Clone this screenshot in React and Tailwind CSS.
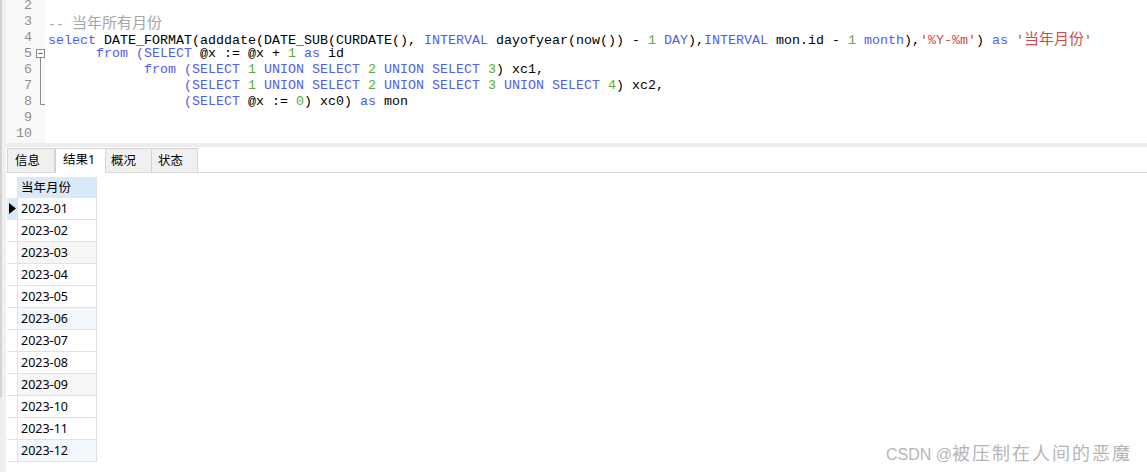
import React from "react";

const K = ({ children }) => <span className="text-[#4f5cf5]">{children}</span>;
const N = ({ children }) => <span className="text-[#5aac3a]">{children}</span>;
const S = ({ children }) => <span className="text-[#d04a4a]">{children}</span>;
const CJK = ({ children }) => (
  <span className="text-[15px] [font-family:'Noto_Sans_CJK_SC',sans-serif]">{children}</span>
);

function Fold({ kind }) {
  if (kind === "start")
    return (
      <svg width="13" height="16" viewBox="0 0 13 16" className="block">
        <rect x="4.5" y="3.5" width="8" height="8" fill="white" stroke="#8c8c8c" />
        <line x1="6.5" y1="7.5" x2="10.5" y2="7.5" stroke="#606060" />
        <line x1="8.5" y1="11.5" x2="8.5" y2="16" stroke="#8c8c8c" />
      </svg>
    );
  if (kind === "mid")
    return (
      <svg width="13" height="16" viewBox="0 0 13 16" className="block">
        <line x1="8.5" y1="0" x2="8.5" y2="16" stroke="#8c8c8c" />
      </svg>
    );
  if (kind === "end")
    return (
      <svg width="13" height="16" viewBox="0 0 13 16" className="block">
        <line x1="8.5" y1="0" x2="8.5" y2="10.5" stroke="#8c8c8c" />
        <line x1="8.5" y1="10.5" x2="13" y2="10.5" stroke="#8c8c8c" />
      </svg>
    );
  return <div className="w-[13px] h-[16px]" />;
}

const lines = [
  { n: 2, fold: null, code: "" },
  {
    n: 3,
    fold: null,
    code: (
      <span className="text-[#a6a6a6]">
        -- <CJK>当年所有月份</CJK>
      </span>
    ),
  },
  {
    n: 4,
    fold: null,
    code: (
      <>
        <K>select</K> DATE_FORMAT(adddate(DATE_SUB(CURDATE(), <K>INTERVAL</K> dayofyear(now()) - <N>1</N>{" "}
        <K>DAY</K>),<K>INTERVAL</K> mon.id - <N>1</N> <K>month</K>),<S>'%Y-%m'</S>) <K>as</K>{" "}
        <S>
          '<CJK>当年月份</CJK>'
        </S>
      </>
    ),
  },
  {
    n: 5,
    fold: "start",
    code: (
      <>
        {"      "}
        <K>from</K> <K>(SELECT</K> @x := @x + <N>1</N> <K>as</K> id
      </>
    ),
  },
  {
    n: 6,
    fold: "mid",
    code: (
      <>
        {"            "}
        <K>from</K> <K>(SELECT</K> <N>1</N> <K>UNION SELECT</K> <N>2</N> <K>UNION SELECT</K> <N>3</N>) xc1,
      </>
    ),
  },
  {
    n: 7,
    fold: "mid",
    code: (
      <>
        {"                 "}
        <K>(SELECT</K> <N>1</N> <K>UNION SELECT</K> <N>2</N> <K>UNION SELECT</K> <N>3</N> <K>UNION SELECT</K>{" "}
        <N>4</N>) xc2,
      </>
    ),
  },
  {
    n: 8,
    fold: "end",
    code: (
      <>
        {"                 "}
        <K>(SELECT</K> @x := <N>0</N>) xc0) <K>as</K> mon
      </>
    ),
  },
  { n: 9, fold: null, code: "" },
  { n: 10, fold: null, code: "" },
];

const months = [
  "2023-01",
  "2023-02",
  "2023-03",
  "2023-04",
  "2023-05",
  "2023-06",
  "2023-07",
  "2023-08",
  "2023-09",
  "2023-10",
  "2023-11",
  "2023-12",
];

const rowBg = (i) => {
  if (i === 2 || i === 8) return "bg-[#f6f6f6]";
  if (i === 5 || i === 11) return "bg-[#f3f8fd]";
  return "bg-white";
};

export default function App() {
  return (
    <div className="relative w-[1147px] h-[472px] bg-white flex overflow-hidden [font-family:'Noto_Sans','Noto_Sans_CJK_SC',sans-serif]">
      {/* left strip */}
      <div className="w-[6px] h-full flex shrink-0">
        <div className="w-[2px] h-full flex flex-col">
          <div className="h-[397px] bg-[#d2d2d2]" />
          <div className="flex-1 bg-[#ececec]" />
        </div>
        <div className="flex-1 bg-[#efefef]" />
      </div>

      <div className="flex-1 flex flex-col min-w-0">
        {/* editor */}
        <div className="h-[143px] flex overflow-hidden bg-white">
          <div className="w-[39px] bg-[#f9f9f9] shrink-0 overflow-hidden">
            <div className="-mt-[2px]">
              {lines.map((l) => (
                <div key={l.n} className="h-[16px] flex">
                  <div className="w-[26px] text-right text-[13.33px] leading-[16px] text-[#8f8f8f] [font-family:'Liberation_Mono',monospace]">
                    {l.n}
                  </div>
                  <Fold kind={l.fold} />
                </div>
              ))}
            </div>
          </div>
          <div className="flex-1 pl-[3px] overflow-hidden">
            <div className="-mt-[2px]">
              {lines.map((l) => (
                <div
                  key={l.n}
                  className="h-[16px] leading-[16px] whitespace-pre text-[13.33px] text-black [font-family:'Liberation_Mono','Noto_Sans_CJK_SC',monospace]"
                >
                  {l.code}
                </div>
              ))}
            </div>
          </div>
        </div>

        {/* separator */}
        <div className="h-[4px] bg-[#ececec]" />

        {/* tabs */}
        <div className="h-[26px] flex items-end border-b border-[#d9d9d9] pl-[1px] bg-white">
          <div className="w-[48px] h-[24px] bg-[#f0f0f0] border border-b-0 border-[#d4d4d4] text-[12.5px] leading-[24px] pl-[7px] text-black">
            信息
          </div>
          <div className="w-[51px] h-[25px] bg-white border-t border-x border-[#d4d4d4] -mb-[1px] text-[12.5px] leading-[22px] pl-[7px] text-black">
            结果1
          </div>
          <div className="w-[46px] h-[24px] bg-[#f0f0f0] border border-b-0 border-l-0 border-[#d4d4d4] text-[12.5px] leading-[24px] pl-[5px] text-black">
            概况
          </div>
          <div className="w-[46px] h-[24px] bg-[#f0f0f0] border border-b-0 border-l-0 border-[#d4d4d4] text-[12.5px] leading-[24px] pl-[6px] text-black">
            状态
          </div>
        </div>

        {/* grid */}
        <div className="pt-[4px] pl-[1px]">
          <div className="flex h-[21px]">
            <div className="w-[11px] bg-white border-r border-[#e2e2e2]" />
            <div className="w-[79px] bg-[#d9e9f7] border-r border-[#e2e2e2] text-[12.5px] leading-[21px] pl-[3px] text-black">
              当年月份
            </div>
          </div>
          {months.map((m, i) => (
            <div key={m} className="flex h-[22px]">
              <div
                className={`w-[11px] border-r border-b border-[#e2e2e2] flex items-center justify-start pl-[2px] ${
                  i === 0 ? "bg-[#d9e9f7]" : "bg-white"
                }`}
              >
                {i === 0 && (
                  <svg width="7" height="11" viewBox="0 0 7 11">
                    <path d="M0 0 L7 5.5 L0 11 Z" fill="#000" />
                  </svg>
                )}
              </div>
              <div
                className={`w-[79px] border-r border-b border-[#e2e2e2] text-[12.5px] leading-[22px] pl-[3px] text-black ${rowBg(i)}`}
              >
                {m}
              </div>
            </div>
          ))}
        </div>
      </div>

      {/* watermark */}
      <div className="absolute right-[15px] bottom-[8px] h-[24px] leading-[24px] text-[#b5b5b5] whitespace-nowrap">
        <span className="text-[16px] [font-family:'Liberation_Sans',sans-serif]">CSDN @</span>
        <span className="text-[18px] tracking-[2px] [font-family:'Noto_Sans_CJK_SC',sans-serif]">
          被压制在人间的恶魔
        </span>
      </div>
    </div>
  );
}
